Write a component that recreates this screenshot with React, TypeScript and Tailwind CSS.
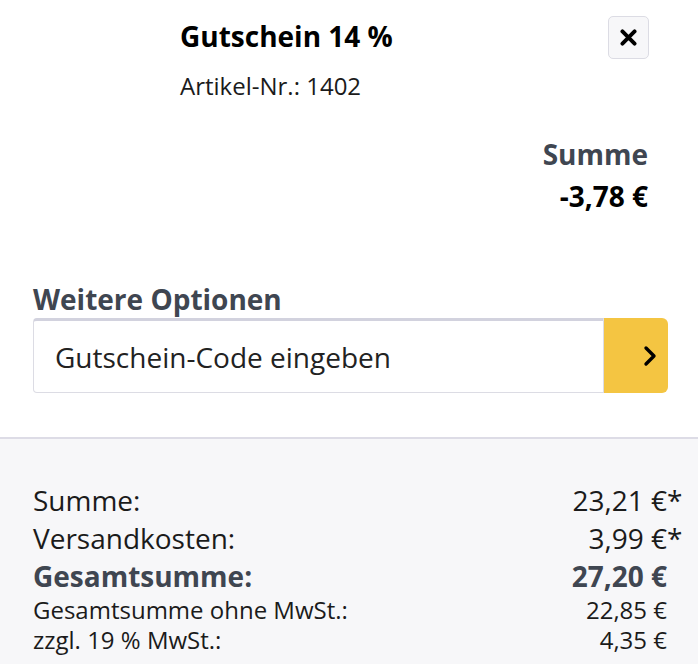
import type { FC } from 'react';

const font = { fontFamily: '"Open Sans", "Noto Sans", sans-serif' };

const Row: FC<{ label: string; value: string; star?: boolean; strong?: boolean; small?: boolean }> = ({
  label,
  value,
  star,
  strong,
  small,
}) => (
  <div
    className={`flex justify-between ${
      small ? 'text-[24px] leading-[30px]' : 'text-[28px] leading-[38px]'
    } ${strong ? 'font-bold text-[#3f4651]' : 'text-[#1b1b1b]'}`}
  >
    <span>{label}</span>
    <span>
      {value}
      {star && <span className="inline-block w-0">*</span>}
    </span>
  </div>
);

export default function App() {
  return (
    <div className="w-[698px] h-[664px] overflow-hidden bg-white flex flex-col" style={font}>
      {/* Artikel */}
      <div className="flex pl-[33px] pr-[50px] pt-[18px]">
        <div className="w-[147px] flex-shrink-0" />
        <div className="flex-1">
          <div className="flex items-start justify-between">
            <div>
              <h2 className="text-[28px] leading-[36px] font-bold text-black">Gutschein 14 %</h2>
              <p className="mt-[16px] text-[24px] leading-[32px] text-[#1b1b1b]">Artikel-Nr.: 1402</p>
            </div>
            <button className="w-[41px] h-[43px] -mt-[2px] -mr-[1px] rounded-[5px] border border-[#dcdce4] bg-[#f7f7f9] flex items-center justify-center">
              <svg className="w-[17px] h-[17px]" viewBox="0 0 14 14" fill="none" stroke="black" strokeWidth={3.2} strokeLinecap="round">
                <path d="M2 2l10 10M12 2L2 12" />
              </svg>
            </button>
          </div>
          <div className="mt-[34px] flex flex-col items-end">
            <p className="text-[28px] leading-[36px] font-bold text-[#3f4651]">Summe</p>
            <p className="mt-[6px] text-[28px] leading-[36px] font-bold text-black">-3,78 €</p>
          </div>
        </div>
      </div>

      {/* Weitere Optionen */}
      <div className="px-[33px] mt-[67px] pb-[44px]">
        <h3 className="text-[28px] leading-[36px] font-bold text-[#3f4651]">Weitere Optionen</h3>
        <div className="flex mt-[1px] w-[635px]">
          <div className="flex-1 h-[75px] border border-[#dcdce4] border-t-[3px] border-t-[#d2d2de] rounded-l-[4px] bg-white flex items-center pl-[21px] text-[28px] text-[#222]">
            Gutschein-Code eingeben
          </div>
          <button className="w-[64px] h-[75px] bg-[#f4c542] rounded-r-[6px] flex items-center justify-center">
            <svg className="w-[14px] h-[22px] ml-[28px]" viewBox="0 0 14 22" fill="none" stroke="black" strokeWidth={3.4} strokeLinecap="round" strokeLinejoin="round">
              <path d="M3 3l8 8-8 8" />
            </svg>
          </button>
        </div>
      </div>

      {/* Zusammenfassung */}
      <div className="flex-1 border-t-2 border-[#dddce6] bg-[#f7f7f9] pl-[33px] pr-[31px] pt-[42px]">
        <Row label="Summe:" value="23,21 €" star />
        <Row label="Versandkosten:" value="3,99 €" star />
        <Row label="Gesamtsumme:" value="27,20 €" strong />
        <Row label="Gesamtsumme ohne MwSt.:" value="22,85 €" small />
        <Row label="zzgl. 19 % MwSt.:" value="4,35 €" small />
      </div>
    </div>
  );
}
